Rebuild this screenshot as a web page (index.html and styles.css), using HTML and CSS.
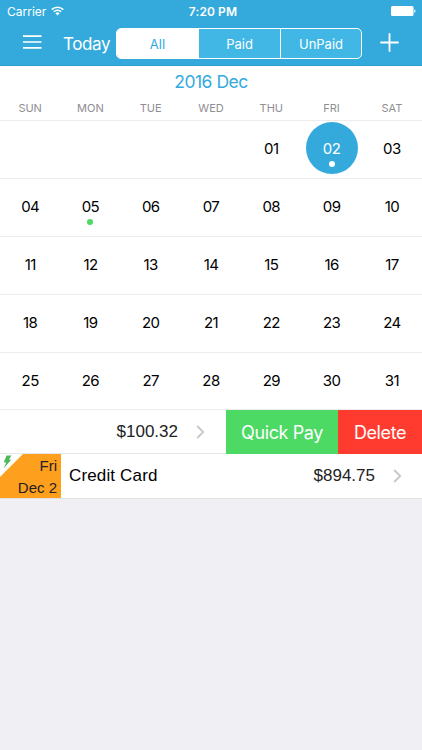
FILE: index.html
```html
<!DOCTYPE html>
<html lang="en">
<head>
    <meta charset="UTF-8">
    <meta name="viewport" content="width=device-width, initial-scale=1.0">
    <title>Bills Calendar</title>
    <link rel="stylesheet" href="styles.css">
</head>
<body>
    <header class="header">
        <div class="status">
            <div class="carrier">
                <span>Carrier</span>
                <svg class="wifi" width="13" height="10" viewBox="0 0 13 10" fill="none" stroke="#fff" stroke-width="1.5">
                    <path d="M0.7 3.6a8.2 8.2 0 0 1 11.6 0"/>
                    <path d="M2.8 5.7a5.2 5.2 0 0 1 7.4 0"/>
                    <path d="M4.4 7.3a3 3 0 0 1 4.2 0L6.5 9.4z" fill="#fff" stroke="none"/>
                </svg>
            </div>
            <span class="time">7:20 PM</span>
            <svg class="battery" width="25" height="10" viewBox="0 0 25 10" fill="#fff">
                <rect x="0" y="0" width="22.5" height="10" rx="1.5"/>
                <path d="M23.3 3.2c1.6.5 1.6 3.1 0 3.6z"/>
            </svg>
        </div>
        <nav class="nav">
            <svg class="menu" width="19" height="14" viewBox="0 0 19 14" stroke="#fff" stroke-width="1.7">
                <path d="M0 1.2h18.5M0 7h18.5M0 12.8h18.5"/>
            </svg>
            <span class="today">Today</span>
            <div class="segments">
                <span class="segment active">All</span>
                <span class="segment">Paid</span>
                <span class="segment">UnPaid</span>
            </div>
            <svg class="plus" width="19" height="19" viewBox="0 0 19 19" stroke="#fff" stroke-width="1.8">
                <path d="M0.3 9.5h18.4M9.5 0.3v18.4"/>
            </svg>
        </nav>
    </header>

    <section class="calendar">
        <h1 class="month">2016 Dec</h1>
        <div class="weekdays">
            <span>SUN</span><span>MON</span><span>TUE</span><span>WED</span><span>THU</span><span>FRI</span><span>SAT</span>
        </div>
        <div class="week">
            <span></span><span></span><span></span><span></span><span>01</span><span class="selected dot">02</span><span>03</span>
        </div>
        <div class="week">
            <span>04</span><span class="dot">05</span><span>06</span><span>07</span><span>08</span><span>09</span><span>10</span>
        </div>
        <div class="week">
            <span>11</span><span>12</span><span>13</span><span>14</span><span>15</span><span>16</span><span>17</span>
        </div>
        <div class="week">
            <span>18</span><span>19</span><span>20</span><span>21</span><span>22</span><span>23</span><span>24</span>
        </div>
        <div class="week">
            <span>25</span><span>26</span><span>27</span><span>28</span><span>29</span><span>30</span><span>31</span>
        </div>
    </section>

    <section class="bills">
        <div class="bill swiped">
            <span class="amount">$100.32</span>
            <svg class="chevron" width="9" height="14" viewBox="0 0 9 14" fill="none" stroke="#c7c7cc" stroke-width="1.8">
                <path d="M1.2 1l6 6-6 6"/>
            </svg>
            <span class="action pay">Quick Pay</span>
            <span class="action delete">Delete</span>
        </div>
        <div class="bill">
            <div class="date">
                <svg class="bolt" width="9" height="14" viewBox="0 0 9 14" fill="#4cb85a">
                    <path d="M3.6 0.4L8.4 0.4L6 4.6L8.2 4.8L0.8 13.2L3.2 7.6L0.8 7.3z"/>
                </svg>
                <span>Fri</span>
                <span>Dec 2</span>
            </div>
            <span class="name">Credit Card</span>
            <span class="amount">$894.75</span>
            <svg class="chevron" width="9" height="14" viewBox="0 0 9 14" fill="none" stroke="#c7c7cc" stroke-width="1.8">
                <path d="M1.2 1l6 6-6 6"/>
            </svg>
        </div>
    </section>
</body>
</html>
```
FILE: styles.css
```css
* {
    box-sizing: border-box;
}

body {
    margin: 0;
    background-color: #efeff4;
    font-family: Inter, Roboto, sans-serif;
    color: #000;
}

.header {
    height: 66px;
    background-color: #34aadc;
    border-bottom: 1px solid #319fce;
    color: #fff;
}

.status {
    display: grid;
    grid-template-columns: 1fr auto 1fr;
    align-items: center;
    height: 22px;
    padding: 0 6px 0 7px;
    font-size: 12px;
}

.carrier {
    display: flex;
    align-items: center;
    gap: 5px;
}

.time {
    padding-left: 3px;
    font-weight: 600;
    letter-spacing: 0.1px;
}

.battery {
    justify-self: end;
}

.nav {
    display: flex;
    align-items: center;
    height: 43px;
    padding-left: 23px;
}

.menu,
.plus {
    margin-bottom: 3px;
}

.today {
    width: 53px;
    margin-left: 21px;
    font-size: 17px;
    letter-spacing: -0.4px;
}

.segments {
    display: grid;
    grid-template-columns: 81px 82px 1fr;
    width: 246px;
    height: 31px;
    border: 1px solid #fff;
    border-radius: 5px;
    background-color: #40b7e4;
    font-size: 13px;
    overflow: hidden;
}

.segment {
    display: flex;
    align-items: center;
    justify-content: center;
}

.segment + .segment {
    border-left: 1px solid #fff;
}

.segment.active {
    background-color: #fff;
    color: #34aadc;
}

.plus {
    margin-left: 18px;
}

.calendar {
    background-color: #fff;
}

.month {
    height: 30px;
    margin: 0;
    font-size: 17.5px;
    font-weight: 400;
    letter-spacing: -0.5px;
    line-height: 31px;
    text-align: center;
    color: #34aadc;
}

.weekdays {
    display: grid;
    grid-template-columns: repeat(7, 1fr);
    height: 24px;
    line-height: 24px;
    text-align: center;
    font-size: 11px;
    color: #8e8e93;
}

.week {
    display: grid;
    grid-template-columns: repeat(7, 1fr);
    justify-items: center;
    align-items: start;
    height: 58px;
    padding-top: 1px;
    border-top: 1px solid #ececee;
    font-size: 15px;
    letter-spacing: -0.6px;
}

.week:last-child {
    border-bottom: 1px solid #ececee;
}

.week span {
    position: relative;
    width: 52px;
    height: 52px;
    border-radius: 50%;
    line-height: 53px;
    text-align: center;
}

.week .selected {
    background-color: #34aadc;
    color: #fff;
}

.dot::after {
    content: "";
    position: absolute;
    left: 23px;
    bottom: 7px;
    width: 6px;
    height: 6px;
    border-radius: 50%;
    background-color: #4cd964;
}

.selected.dot::after {
    background-color: #fff;
}

.bills {
    border-bottom: 1px solid #e2e2e5;
}

.bill {
    display: flex;
    align-items: center;
    height: 44px;
    background-color: #fff;
    font-family: "Liberation Sans", Arial, sans-serif;
    font-size: 17px;
}

.swiped {
    box-shadow: inset 0 -1px #e8e8ea;
}

.amount {
    margin-left: auto;
    color: #222;
}

.chevron {
    margin: 0 20px 0 18px;
}

.swiped .chevron {
    margin-right: 21px;
}

.action {
    display: flex;
    align-items: center;
    justify-content: center;
    height: 44px;
    font-family: Inter, Roboto, sans-serif;
    font-size: 18px;
    letter-spacing: -0.4px;
    color: #fff;
}

.pay {
    width: 112px;
    background-color: #4cd964;
}

.delete {
    width: 84px;
    background-color: #ff3b30;
}

.date {
    position: relative;
    display: flex;
    flex-direction: column;
    align-items: flex-end;
    width: 61px;
    height: 44px;
    padding: 1px 4px 0 0;
    background: linear-gradient(135deg, #fff 16px, #ff9f1e 16.5px);
    font-size: 15px;
    line-height: 22px;
    color: #222;
}

.bolt {
    position: absolute;
    top: 1px;
    left: 3px;
}

.name {
    margin-left: 8px;
    letter-spacing: 0.15px;
}
```
